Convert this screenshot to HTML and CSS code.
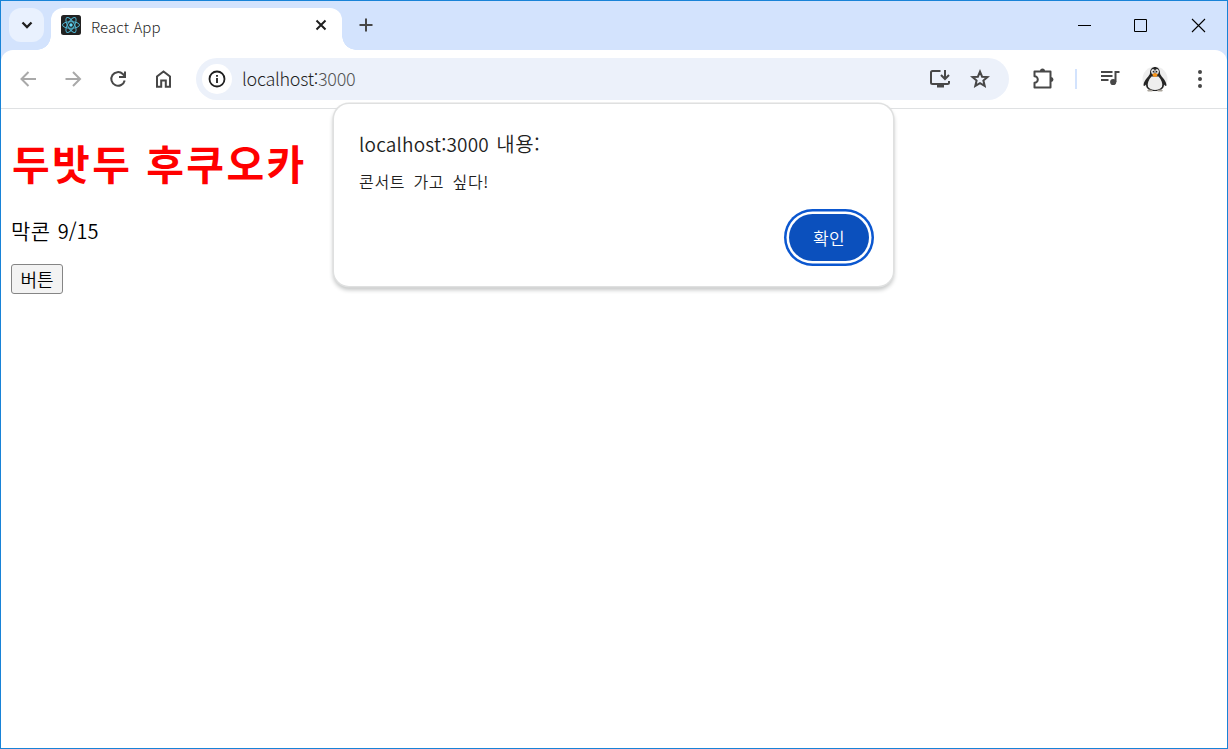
FILE: index.html
```html
<!DOCTYPE html>
<html lang="ko">
	<head>
		<meta charset="utf-8">
		<title>React App</title>
		<link rel="stylesheet" href="styles.css">
	</head>
	<body>
		<div class="window">
			<div class="tabstrip">
				<button class="tab-search">
					<svg width="12" height="8" viewBox="0 0 12 8"><path d="M1.5 1.5 6 6l4.500-4.500" fill="none" stroke="#1f1f1f" stroke-width="2.300"/></svg>
				</button>
				<div class="tab">
					<svg class="favicon" width="20" height="20" viewBox="0 0 20 20">
						<rect width="20" height="20" rx="2.500" fill="#222"/>
						<g fill="none" stroke="#4fb4d0" stroke-width="1">
							<ellipse cx="10" cy="10" rx="8.500" ry="3.300"/>
							<ellipse cx="10" cy="10" rx="8.500" ry="3.300" transform="rotate(60 10 10)"/>
							<ellipse cx="10" cy="10" rx="8.500" ry="3.300" transform="rotate(120 10 10)"/>
						</g>
						<circle cx="10" cy="10" r="1.700" fill="#61dafb"/>
					</svg>
					<span class="tab-title">React App</span>
					<svg class="tab-close" width="12" height="12" viewBox="0 0 12 12"><path d="M1.500 1.500l9 9M10.500 1.500l-9 9" stroke="#1f1f1f" stroke-width="2"/></svg>
				</div>
				<svg class="new-tab" width="14" height="14" viewBox="0 0 14 14"><path d="M7 .5v13M.5 7h13" stroke="#474747" stroke-width="2"/></svg>
				<div class="controls">
					<svg width="15" height="15" viewBox="0 0 15 15"><path d="M1 7.500h13" stroke="#000"/></svg>
					<svg width="15" height="15" viewBox="0 0 15 15"><path d="M.5 1.500h12v12H.5z" fill="none" stroke="#000"/></svg>
					<svg width="15" height="15" viewBox="0 0 15 15"><path d="M1 1l13 13M14 1L1 14" stroke="#000" stroke-width="1.100"/></svg>
				</div>
			</div>
			<div class="toolbar">
				<span class="tool off"><svg width="20" height="20" viewBox="0 0 20 20"><path d="M18 10H4M10.500 3l-7 7 7 7"/></svg></span>
				<span class="tool off"><svg width="20" height="20" viewBox="0 0 20 20"><path d="M2.500 10h14M10 3l7 7-7 7"/></svg></span>
				<span class="tool"><svg width="20" height="20" viewBox="0 0 20 20"><path d="M16.700 11.500A6.800 6.800 0 1 1 14.800 5L17 7.200M17 2.500v5.500h-6"/></svg></span>
				<span class="tool"><svg width="20" height="20" viewBox="0 0 20 20"><path d="M4 17.800V7.500L10.500 2.500l6.500 5v10.300H12.800V11.500H8.200v6.300z"/></svg></span>
				<div class="omnibox">
					<span class="site-info"><svg width="18" height="18" viewBox="0 0 18 18"><circle cx="9" cy="9" r="7.500" fill="none" stroke="#1f1f1f" stroke-width="1.800"/><path d="M9 8v5M9 5v1.800" stroke="#1f1f1f" stroke-width="1.800"/></svg></span>
					<span class="url">localhost:<span class="port">3000</span></span>
					<svg class="install" width="22" height="20" viewBox="0 0 22 20"><path d="M11.500 2H3.500q-1.500 0-1.500 1.500v10q0 1.500 1.500 1.500h15q1.500 0 1.500-1.500V12M16 1v8.500M12 6l4 4 4-4"/><path d="M8 16h7v2.500H8z" fill="#474747" stroke="none"/></svg>
					<svg class="star" width="20" height="20" viewBox="0 0 20 20"><path d="M10 2.700l2.100 5 5.400.4-4.100 3.500 1.300 5.300L10 14.100l-4.700 2.800 1.300-5.300L2.500 8.100l5.400-.4z"/></svg>
				</div>
				<span class="tool ext"><svg width="22" height="22" viewBox="0 0 22 22"><path d="M2.500 3.500h16v16h-16v-4.700a3.300 3.300 0 0 0 0-6.600z" stroke-linejoin="round"/><path d="M8 3a2.500 2.500 0 0 1 5 0zM19 9a2.500 2.500 0 0 1 0 5z" fill="#474747" stroke="none"/></svg></span>
				<span class="divider"></span>
				<span class="tool media"><svg width="20" height="18" viewBox="0 0 20 18"><path d="M1 2h11.500M1 6h11.500M1 10h7.500M15.500 12V2H19.500"/><circle cx="13.200" cy="12" r="3.100" fill="#474747" stroke="none"/></svg></span>
				<span class="tool">
					<svg class="avatar" width="26" height="26" viewBox="0 0 26 26">
						<circle cx="13" cy="13" r="12.500" fill="#eee"/>
						<path d="M8 7C8-1 18-1 18 7c0 3 6 6.500 6.500 12 0 1.500-1.500 1-2.500-.5 0 4-3 6.500-9 6.500s-9-2.500-9-6.500c-1 1.500-2.500 2-2.500.5C2 13.500 8 10 8 7z" fill="#252525"/>
						<path d="M9.500 10.500h7c3 3.500 4.500 7 3.500 10-1.500 4.500-12.500 4.500-14 0-1-3 .5-6.500 3.500-10z" fill="#eee"/>
						<ellipse cx="11" cy="5.500" rx="1.900" ry="2.500" fill="#eee"/><ellipse cx="15" cy="5.500" rx="1.900" ry="2.500" fill="#eee"/>
						<circle cx="11.500" cy="5.700" r=".9" fill="#222"/><circle cx="14.500" cy="5.700" r=".9" fill="#222"/>
						<path d="M10.200 8.500q2.800-3 5.600 0-.8 2.500-2.800 2.500t-2.800-2.500z" fill="#f4941d"/>
						<path d="M5 24.500q3-2 6 .3l-1 .7H6zM21 24.500q-3-2-6 .3l1 .7H20z" fill="#aaa49b"/>
					</svg>
				</span>
				<span class="tool menu"><svg width="5" height="20" viewBox="0 0 5 20"><g fill="#474747" stroke="none"><circle cx="2" cy="3" r="2"/><circle cx="2" cy="10" r="2"/><circle cx="2" cy="17" r="2"/></g></svg></span>
			</div>
			<div class="page">
				<h1>두밧두 후쿠오카</h1>
				<p>막콘 <span class="date">9/15</span></p>
				<button class="page-button">버튼</button>
			</div>
			<div class="dialog">
				<div class="dialog-title"><span class="host">localhost:3000</span> 내용:</div>
				<div class="dialog-message">콘서트 가고 싶다!</div>
				<button class="ok">확인</button>
			</div>
		</div>
	</body>
</html>
```
FILE: styles.css
```css
html, body {
	height: 100%;
	margin: 0;
}

body {
	font-family: "Noto Sans CJK KR", sans-serif;
	color: #1f1f1f;
}

button {
	padding: 0;
	border: 0;
	font-family: inherit;
}

svg {
	display: block;
	flex: none;
}

.window {
	position: relative;
	box-sizing: border-box;
	height: 100%;
	border: 1px solid #1883d7;
	background: #fff;
	overflow: hidden;
}

.tabstrip {
	display: flex;
	align-items: flex-start;
	height: 61px;
	box-sizing: border-box;
	padding: 7px 0 12px 8px;
	background: #d3e3fd;
}

.tab-search {
	display: flex;
	align-items: center;
	justify-content: center;
	width: 35px;
	height: 34px;
	border-radius: 12px;
	background: #e9f1fe;
}

.tab {
	position: relative;
	display: flex;
	box-sizing: border-box;
	width: 291px;
	height: 43px;
	margin-left: 7px;
	padding: 7px 15px 0 10px;
	border-radius: 12px 12px 0 0;
	background: #fff;
}

/* curved feet of the active tab */
.tab::before, .tab::after {
	content: "";
	position: absolute;
	bottom: 1px;
	width: 14px;
	height: 14px;
}

.tab::before {
	right: 100%;
	background: radial-gradient(circle at 0 0, transparent 13.5px, #fff 14px);
}

.tab::after {
	left: 100%;
	background: radial-gradient(circle at 100% 0, transparent 13.5px, #fff 14px);
}

.tab-title {
	flex: 1;
	margin-left: 10px;
	font-size: 15px;
	font-weight: 300;
	line-height: 24px;
	letter-spacing: 0.1px;
}

.tab-close {
	margin-top: 4px;
}

.new-tab {
	margin: 10px 0 0 17px;
}

.controls {
	display: flex;
	gap: 42px;
	margin: 10px 21px 0 auto;
}

.toolbar {
	position: relative;
	display: flex;
	align-items: center;
	box-sizing: border-box;
	height: 59px;
	margin-top: -12px;
	padding-left: 4.5px;
	border-bottom: 1px solid #dfe1e3;
	border-radius: 12px 12px 0 0;
	background: #fff;
}

.tool {
	display: flex;
	flex: none;
	justify-content: center;
	width: 45px;
}

.tool svg, .install, .star {
	fill: none;
	stroke: #474747;
	stroke-width: 2;
}

.tool .avatar {
	stroke: none;
}

.off svg {
	stroke: #a9a9a9;
}

.omnibox {
	display: flex;
	align-items: center;
	box-sizing: border-box;
	width: 813px;
	height: 42px;
	margin-left: 10.5px;
	padding: 0 19px 0 6px;
	border-radius: 21px;
	background: #ecf1fa;
}

.site-info {
	display: flex;
	align-items: center;
	justify-content: center;
	width: 30px;
	height: 30px;
	border-radius: 50%;
	background: #fff;
}

.url {
	flex: 1;
	margin: 0 0 2px 10px;
	font-size: 18px;
	font-weight: 300;
	line-height: 30px;
	letter-spacing: -0.28px;
}

.port {
	color: #555;
}

.install {
	margin-right: 19px;
}

.ext {
	margin-left: 11px;
}

.divider {
	width: 2px;
	height: 20px;
	margin: 0 10.5px 0 10px;
	background: #d3e3fd;
}

.page {
	padding: 0 10px;
	color: #000;
}

h1 {
	margin: 25px 0 0 1px;
	font-size: 41px;
	font-weight: 700;
	line-height: 56px;
	letter-spacing: 2.4px;
	color: #f00;
}

p {
	margin: 26px 0 0;
	font-size: 21px;
	font-weight: 350;
	line-height: 28px;
	letter-spacing: 0.4px;
	word-spacing: 1px;
}

.date {
	font-size: 20px;
	letter-spacing: 0;
}

.page-button {
	box-sizing: border-box;
	width: 52px;
	height: 30px;
	margin-top: 19px;
	border: 1px solid #858585;
	border-radius: 3px;
	background: #f3f3f3;
	font-size: 18px;
	font-weight: 350;
	line-height: 26px;
	color: #000;
}

.dialog {
	position: absolute;
	top: 103px;
	left: 333px;
	display: flex;
	flex-direction: column;
	box-sizing: border-box;
	width: 559px;
	height: 182px;
	padding: 26px 24px 25px 25px;
	border-radius: 15px;
	background: #fff;
	box-shadow: 0 0 0 1.5px #dfe0e0, 0 3px 4px 1px #c4c6c6;
}

.dialog-title {
	font-size: 20px;
	font-weight: 350;
	line-height: 28px;
	letter-spacing: 0.6px;
	word-spacing: 1px;
}

.host {
	font-size: 19px;
	letter-spacing: 0.2px;
}

.dialog-message {
	margin-top: 11px;
	font-size: 16px;
	font-weight: 350;
	line-height: 24px;
	letter-spacing: 0.7px;
	word-spacing: 3px;
}

.ok {
	align-self: flex-end;
	width: 80px;
	height: 47px;
	margin: 21px 0 0;
	padding-bottom: 1px;
	border-radius: 24px;
	background: #0b50bd;
	box-shadow: 0 0 0 2.5px #fff, 0 0 0 5px #0b57d0;
	font-size: 17px;
	font-weight: 350;
	letter-spacing: 0.3px;
	color: #fff;
}
```
